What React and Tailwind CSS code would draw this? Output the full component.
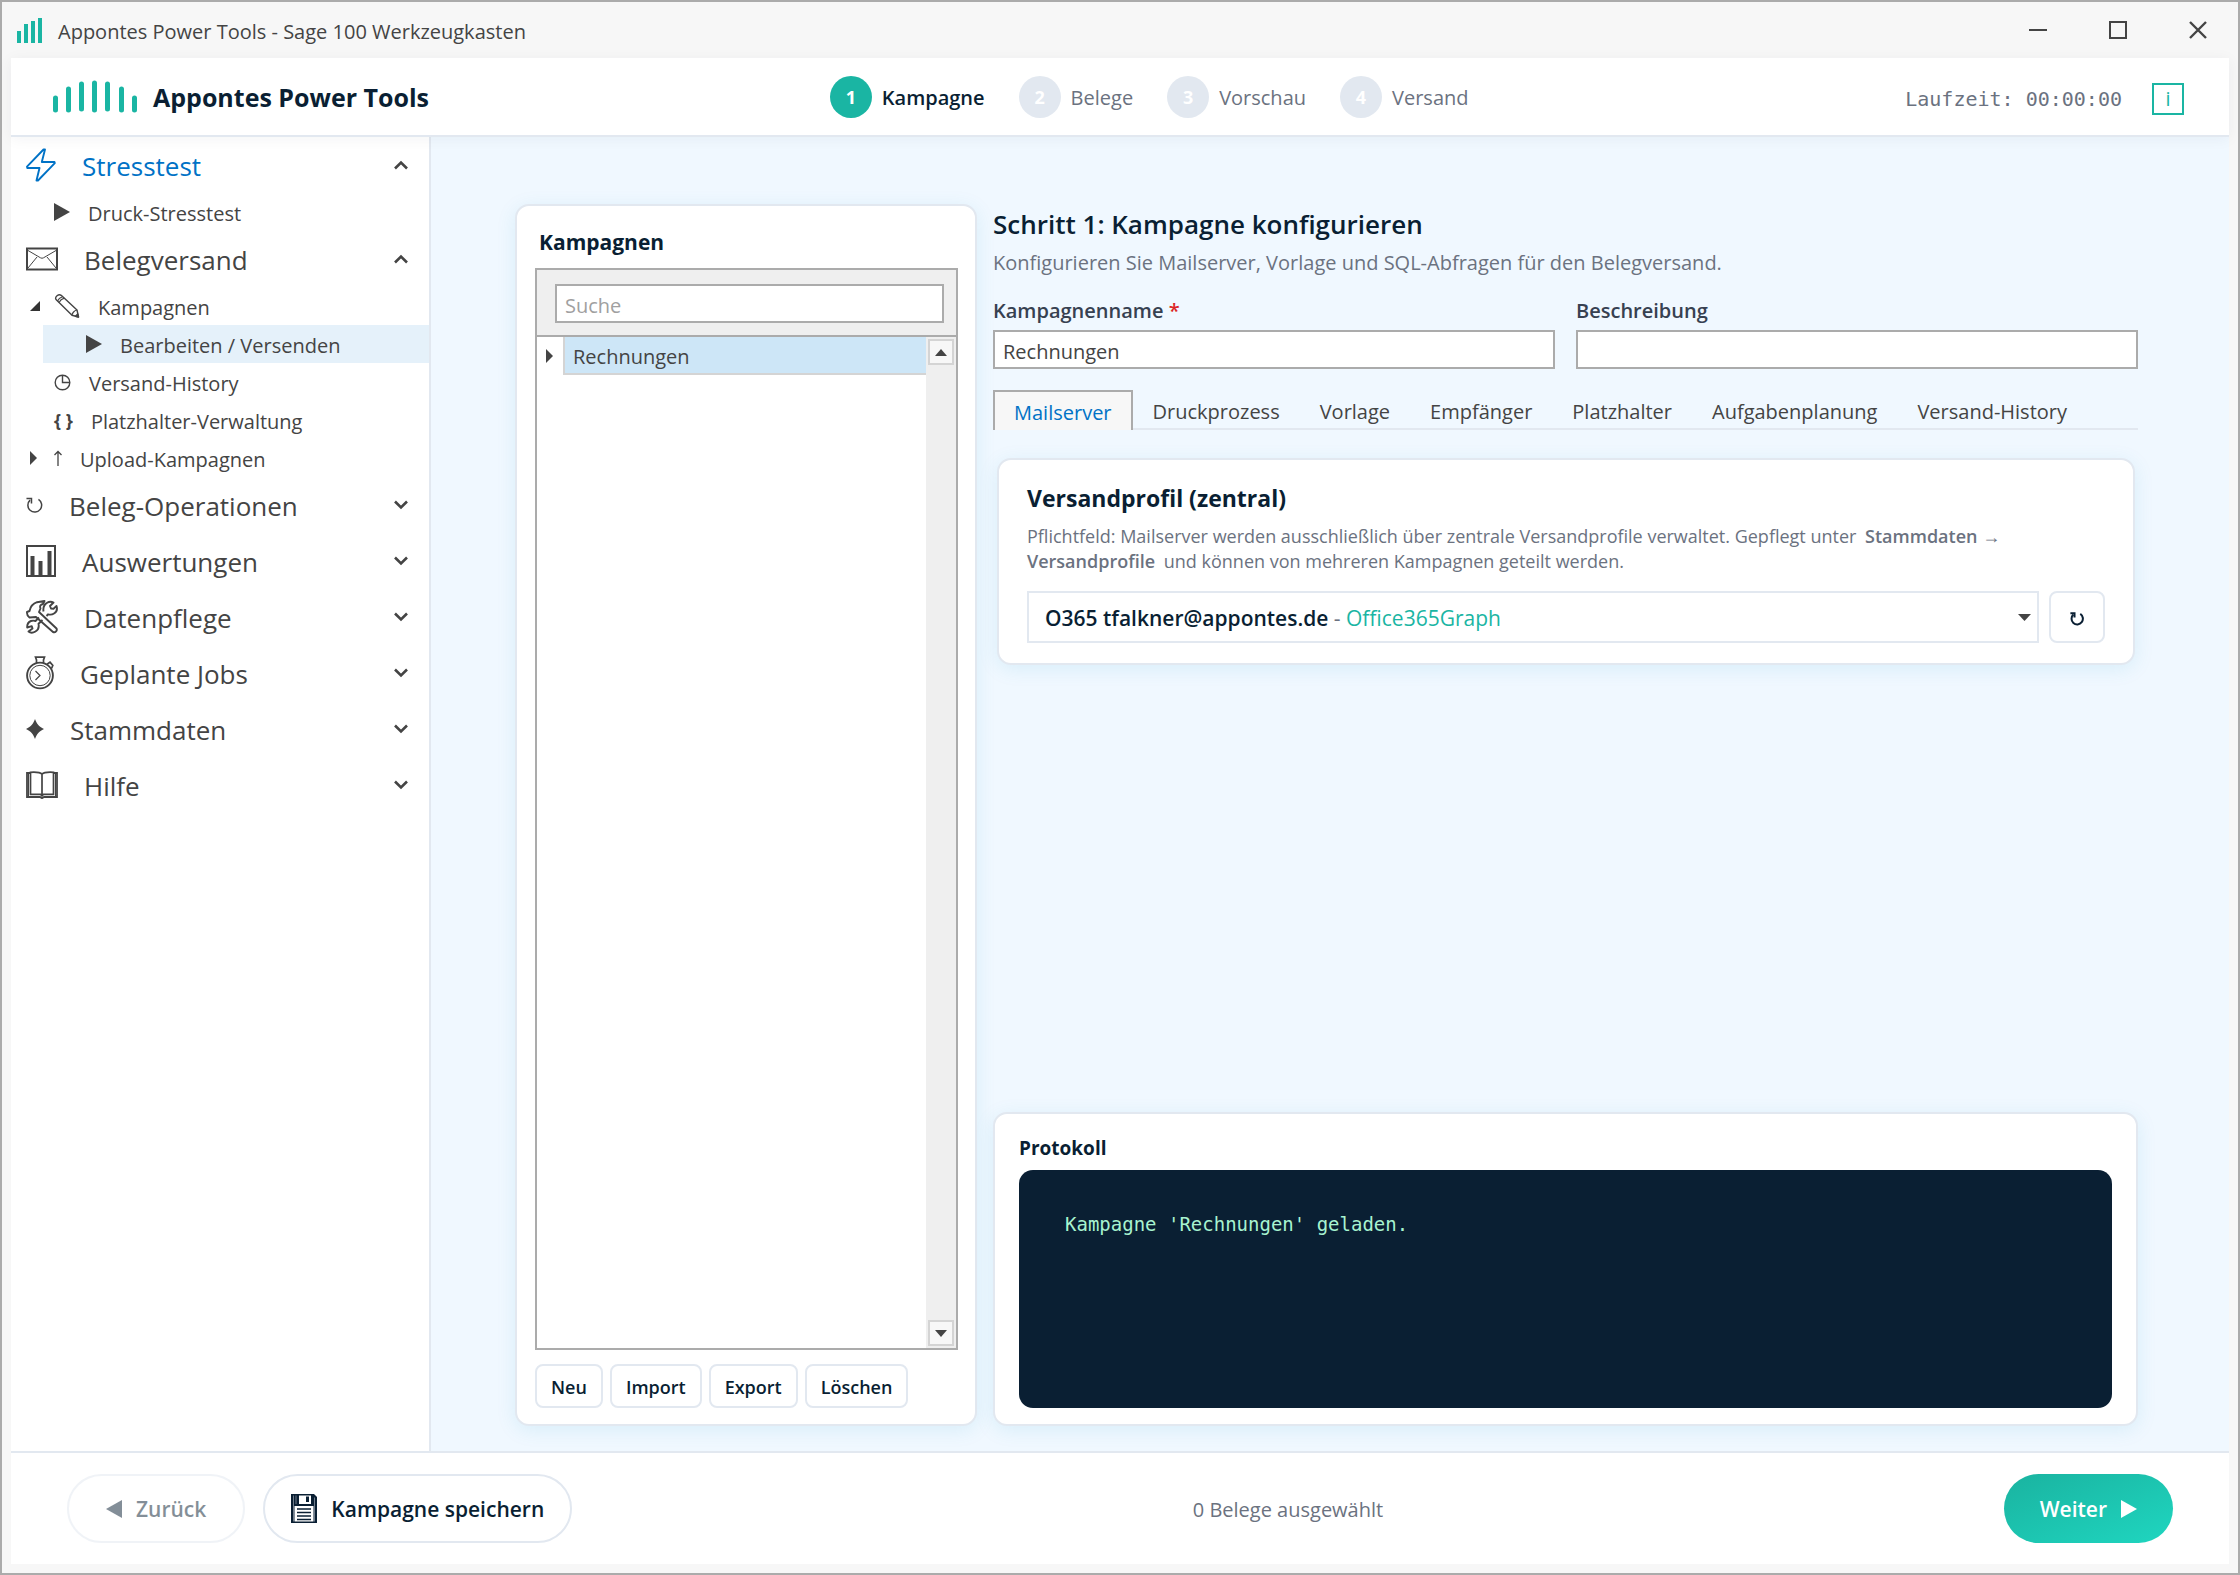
import { useState } from "react";

const CaretRight = () => (
  <svg width="8" height="14" viewBox="0 0 8 14" fill="#444">
    <path d="M0 0 7 7 0 14Z" />
  </svg>
);

const CaretExpanded = () => (
  <svg width="10" height="10" viewBox="0 0 10 10" fill="#333">
    <path d="M10 0V10H0Z" />
  </svg>
);

const PlayIcon = ({ className = "" }) => (
  <svg
    width="16"
    height="18"
    viewBox="0 0 16 18"
    fill="currentColor"
    className={className}
  >
    <path d="M0 0 16 9 0 18Z" />
  </svg>
);

const BoltIcon = () => (
  <svg width="30" height="34" viewBox="0 0 30 34" fill="none" stroke="currentColor" strokeWidth="1.900" strokeLinejoin="round">
    <path d="M17.500 1.500H19L15.800 14H28.500L28.800 15.200 12 32.500H10.500L13.500 20H1.300L1 18.600Z" />
  </svg>
);

const MailIcon = () => (
  <svg width="32" height="24" viewBox="0 0 32 24" fill="none" stroke="currentColor">
    <rect x="1" y="1.500" width="30" height="21" strokeWidth="2" />
    <path d="M2 3.500 14.500 10.800Q16 11.700 17.500 10.800L30 3.500M2 21 11 10M30 21 21 10" strokeWidth="1" />
  </svg>
);

const PencilIcon = () => (
  <svg width="26" height="26" viewBox="0 0 26 26" fill="none" stroke="currentColor" strokeWidth="1.400" strokeLinejoin="round">
    <path d="M2 6.500C0.500 4 4.500 0.500 7.200 2.300L23 17 24.500 24 18 22.300Z" />
    <path d="M3.500 8C5 5 6.500 4.500 8.600 3.700M5 9.500C6.500 6.500 8 5.800 10.200 5.200M18 22.300C18 20 20.500 17.500 23 17" strokeWidth="1.200" />
    <path d="M24.500 24 21.500 23.200 23.700 21Z" fill="currentColor" />
  </svg>
);

const ClockIcon = () => (
  <svg width="17" height="17" viewBox="0 0 17 17" fill="none" stroke="currentColor" strokeWidth="1.400">
    <circle cx="8.500" cy="8.500" r="7.300" />
    <path d="M8.500 1.500V8.500H15.500" />
  </svg>
);

const UploadIcon = () => (
  <svg width="8" height="16" viewBox="0 0 8 16" fill="none" stroke="currentColor" strokeWidth="1.300">
    <path d="M4 16V1.500M0.500 5 4 1.500 7.500 5" />
  </svg>
);

const RefreshIcon = ({ size = 17, stroke = 1.6 }) => (
  <svg width={size} height={size} viewBox="0 0 18 18" fill="none" stroke="currentColor" strokeWidth={stroke}>
    <path d="M13.200 2.500A7.300 7.300 0 1 1 4.300 3.300" />
    <path d="M0.500 1.600H5.800V7" />
  </svg>
);

const ChartIcon = () => (
  <svg width="30" height="32" viewBox="0 0 30 32" fill="none" stroke="currentColor">
    <rect x="1" y="1" width="28" height="30" strokeWidth="2" />
    <path d="M6.500 30V11M14.500 30V16M23.500 30V6" strokeWidth="4" />
  </svg>
);

const ToolsIcon = () => (
  <svg width="32" height="34" viewBox="0 0 32 34" fill="none" stroke="currentColor" strokeWidth="1.900" strokeLinejoin="round">
    <path d="M10 17 3.500 17.500C1.500 16 0.800 14 1 12L3.500 11C4.500 6.500 7 3.500 11 2.200L18.500 1 17 4C14.500 4.500 13.500 6 14.500 8.500L13 12 30.500 28.500C31.500 30.500 29.500 33 27 32Z" />
    <path d="M17.500 11.500C17 8 18 4.500 21 2.800 23 1.600 25.500 1.500 27.500 2.500L24 6 25 8.500 27.500 8.800 30.500 6C31.500 9 30.500 12 28 13.500 26.500 14.500 24 14.800 22 14.300L20.500 16M16.500 20 12.500 23.800C13.200 27 12 30 9.500 31.500 7 33 4 32.800 2.500 31.500L6.500 28.500 5.800 26.200 1.200 27.500C1 24.500 2.500 22 5 21 6.500 20.500 8 20.500 9.500 21L13 17.500" />
  </svg>
);

const StopwatchIcon = () => (
  <svg width="28" height="34" viewBox="0 0 28 34" fill="none" stroke="currentColor">
    <circle cx="14" cy="19.500" r="12.900" strokeWidth="1.900" />
    <circle cx="14" cy="19.500" r="10.200" strokeWidth="1" />
    <path d="M10.500 7V4L9.500 1.200H18.500L17.500 4V7M21 8.200 24 6.200 26.800 9.500 25.500 12.500" strokeWidth="1.700" />
    <path d="M9.500 15 14 19.500 9.500 24" strokeWidth="1.200" />
  </svg>
);

const SparkIcon = () => (
  <svg width="18" height="20" viewBox="0 0 18 20" fill="currentColor">
    <path d="M9 0C10.500 4.500 12.800 7.500 18 10 12.800 12.500 10.500 15.500 9 20 7.500 15.500 5.200 12.500 0 10 5.200 7.500 7.500 4.500 9 0Z" />
  </svg>
);

const BookIcon = () => (
  <svg width="32" height="28" viewBox="0 0 32 28" fill="none" stroke="currentColor">
    <path d="M4.500 2H1V26H14L16 27.200 18 26H31V2H27.500" strokeWidth="1.800" />
    <path d="M16 3.200C14.500 1.600 9 1 4.500 1.300V23.300H14.500L16 25 17.500 23.300H27.500V1.300C23 1 17.500 1.600 16 3.200ZM16 3V25" strokeWidth="1.700" />
    <path d="M2.500 3V25M29.500 3V25" strokeWidth="1" />
  </svg>
);

const FloppyIcon = () => (
  <svg width="26" height="29" viewBox="0 0 26 29">
    <path d="M0 0H23L26 3V29H0Z" fill="#0a1f33" />
    <rect x="8" y="1.500" width="12" height="8.500" fill="#fff" />
    <rect x="15" y="2.500" width="3" height="5.500" fill="#0a1f33" />
    <rect x="3.500" y="12" width="19" height="15.500" fill="#fff" />
    <path d="M6 15H20M6 18.500H20M6 22H20M6 25.500H20" stroke="#0a1f33" strokeWidth="1.300" />
    <path d="M2.500 1.500V27.500M5 1.500V10M23.500 3.500V27.500" stroke="#8a95a3" strokeWidth="0.800" />
  </svg>
);

const Chevron = ({ open }) => (
  <svg width="14" height="10" viewBox="0 0 14 10" fill="none" stroke="#444" strokeWidth="2.600" className="ml-auto">
    <path d={open ? "M1 8.500 7 2.500 13 8.500" : "M1 1.500 7 7.500 13 1.500"} />
  </svg>
);

const NavGroup = ({ icon, label, open, active, children }) => (
  <li>
    <button
      aria-expanded={!!open}
      className={`flex h-14 w-full items-center gap-[26px] pr-[21px] pl-[15px] text-[26px] ${
        active ? "text-[#0072c6]" : "text-[#444]"
      }`}
    >
      {icon}
      <span className="pt-[3px]">{label}</span>
      <Chevron open={open} />
    </button>
    {children && <ul>{children}</ul>}
  </li>
);

const NavItem = ({ icon, label, caret, nested, selected }) => (
  <li className={nested ? "pl-8" : ""}>
    <a
      href="#"
      aria-current={selected ? "page" : undefined}
      className={`flex h-[38px] items-center text-[20px] text-[#444] ${
        nested ? "pl-[11px]" : "pl-[19px]"
      } ${selected ? "bg-[#e5f1fa]" : ""}`}
    >
      <span className={nested ? "" : "w-6 shrink-0"}>{caret}</span>
      <span className={`flex items-center gap-[18px] ${nested ? "pl-8" : ""}`}>
        {icon}
        <span className="pt-[3px]">{label}</span>
      </span>
    </a>
  </li>
);

const steps = ["Kampagne", "Belege", "Vorschau", "Versand"];

const tabs = [
  "Mailserver",
  "Druckprozess",
  "Vorlage",
  "Empfänger",
  "Platzhalter",
  "Aufgabenplanung",
  "Versand-History",
];

const cardClass =
  "rounded-[14px] border-2 border-[#e2e8f0] bg-white shadow-[0_4px_20px_rgba(0,150,200,0.1)]";
const inputClass =
  "h-[39px] w-full border-2 border-[#ababab] bg-white px-2 pt-[3px] text-[20px] text-[#444] outline-none";
const smallButton =
  "h-11 rounded-lg border-2 border-[#e2e8f0] bg-white px-[14px] pt-[2px] text-[18px] font-semibold text-[#0a1f33]";

const TitleBar = () => (
  <div className="flex h-14 items-center pl-[15px] text-[#444]">
    <svg width="26" height="25" viewBox="0 0 26 25" fill="#1ab5a3">
      <path d="M0 13H4V25H0ZM7 6H11V25H7ZM14 3H18V25H14ZM21 0H25V25H21Z" />
    </svg>
    <span className="ml-[15px] pt-[3px] text-[20px]">
      Appontes Power Tools - Sage 100 Werkzeugkasten
    </span>
    <div className="ml-auto flex items-center">
      <button aria-label="Minimieren" className="flex h-14 w-20 items-center justify-center">
        <svg width="18" height="18" viewBox="0 0 18 18" stroke="#444" strokeWidth="2">
          <path d="M0 9H18" />
        </svg>
      </button>
      <button aria-label="Maximieren" className="flex h-14 w-20 items-center justify-center">
        <svg width="18" height="18" viewBox="0 0 18 18" fill="none" stroke="#444" strokeWidth="2">
          <rect x="1" y="1" width="16" height="16" />
        </svg>
      </button>
      <button aria-label="Schließen" className="flex h-14 w-20 items-center justify-center">
        <svg width="18" height="18" viewBox="0 0 18 18" stroke="#444" strokeWidth="2.400">
          <path d="M1 1 17 17M17 1 1 17" />
        </svg>
      </button>
    </div>
  </div>
);

const Header = () => (
  <header className="relative flex h-[79px] items-center border-b-2 border-[#e2e8f0] bg-white pr-[45px] pl-[42px] shadow-[0_2px_14px_rgba(10,31,51,0.05)]">
    <div className="flex items-center gap-[15px]">
      <svg width="85" height="33" viewBox="0 0 85 33" stroke="#1ab5a3" strokeWidth="5" strokeLinecap="round">
        <path d="M2.500 18V30M15.500 9V30M28.500 4V29M41.500 3V30M54.500 4V29M68.500 9V30M81.500 18V30" />
      </svg>
      <span className="pt-[3px] text-[25px] font-bold text-[#0a1f33]">Appontes Power Tools</span>
    </div>
    <ol className="flex flex-1 items-center justify-center gap-[34px] pr-9">
      {steps.map((step, i) => (
        <li key={step} className="flex items-center gap-[10px]">
          <span
            className={`flex size-[42px] items-center justify-center rounded-full pt-[2px] text-[18px] font-bold text-white ${
              i === 0 ? "bg-[#1ab5a3]" : "bg-[#e2e8f0]"
            }`}
          >
            {i + 1}
          </span>
          <span
            className={`pt-[3px] text-[20px] ${
              i === 0 ? "font-semibold text-[#0a1f33]" : "text-[#6b7280]"
            }`}
          >
            {step}
          </span>
        </li>
      ))}
    </ol>
    <div className="flex items-center justify-end gap-[30px] pt-1">
      <span className="font-['DejaVu_Sans_Mono',monospace] text-[20px] text-[#6b7280]">
        Laufzeit: 00:00:00
      </span>
      <button
        aria-label="Information"
        className="flex size-8 items-center justify-center border-2 border-[#1ab5a3] text-[20px] text-[#1ab5a3]"
      >
        i
      </button>
    </div>
  </header>
);

const Sidebar = () => (
  <nav className="w-[420px] shrink-0 border-r-2 border-[#e2e8f0] bg-white">
    <ul>
      <NavGroup icon={<BoltIcon />} label="Stresstest" open active>
        <NavItem icon={<PlayIcon />} label="Druck-Stresstest" />
      </NavGroup>
      <NavGroup icon={<MailIcon />} label="Belegversand" open>
        <NavItem icon={<PencilIcon />} label="Kampagnen" caret={<CaretExpanded />} />
        <NavItem icon={<PlayIcon />} label="Bearbeiten / Versenden" nested selected />
        <NavItem icon={<ClockIcon />} label="Versand-History" />
        <NavItem
          icon={<span className="text-[18px] font-bold">{"{ }"}</span>}
          label="Platzhalter-Verwaltung"
        />
        <NavItem icon={<UploadIcon />} label="Upload-Kampagnen" caret={<CaretRight />} />
      </NavGroup>
      <NavGroup icon={<RefreshIcon />} label="Beleg-Operationen" />
      <NavGroup icon={<ChartIcon />} label="Auswertungen" />
      <NavGroup icon={<ToolsIcon />} label="Datenpflege" />
      <NavGroup icon={<StopwatchIcon />} label="Geplante Jobs" />
      <NavGroup icon={<SparkIcon />} label="Stammdaten" />
      <NavGroup icon={<BookIcon />} label="Hilfe" />
    </ul>
  </nav>
);

const ScrollButton = ({ up }) => (
  <button
    aria-label={up ? "Nach oben" : "Nach unten"}
    className="flex size-[26px] items-center justify-center border-2 border-[#d4d4d4] bg-[#f7f7f7]"
  >
    <svg width="12" height="7" viewBox="0 0 12 7" fill="#444">
      <path d={up ? "M0 7 6 0 12 7Z" : "M0 0H12L6 7Z"} />
    </svg>
  </button>
);

const CampaignList = () => {
  const [search, setSearch] = useState("");

  return (
    <section className={`${cardClass} flex w-[462px] shrink-0 flex-col pt-5 pr-[17px] pb-4 pl-[18px]`}>
      <h2 className="px-1 text-[21px] leading-8 font-bold text-[#0a1f33]">Kampagnen</h2>
      <div className="mt-[10px] flex flex-1 flex-col border-2 border-[#ababab]">
        <div className="border-b-2 border-[#ababab] bg-[#efefef] pt-[14px] pr-3 pb-3 pl-[18px]">
          <input
            type="text"
            aria-label="Suche"
            placeholder="Suche"
            value={search}
            onChange={(e) => setSearch(e.target.value)}
            className={`${inputClass} block placeholder:text-[#a0a0a0]`}
          />
        </div>
        <div className="flex flex-1">
          <div className="flex-1">
            <div className="flex h-[38px]">
              <div className="flex w-[26px] items-center justify-center">
                <CaretRight />
              </div>
              <div className="flex flex-1 items-center border-b-2 border-l-2 border-[#d4d4d4] bg-[#cde6f7] pt-[3px] pl-2 text-[20px] text-[#444]">
                Rechnungen
              </div>
            </div>
          </div>
          <div className="flex w-[30px] flex-col items-center justify-between bg-[#efefef] py-[2px]">
            <ScrollButton up />
            <ScrollButton />
          </div>
        </div>
      </div>
      <div className="mt-[14px] flex gap-[7px]">
        <button className={smallButton}>Neu</button>
        <button className={smallButton}>Import</button>
        <button className={smallButton}>Export</button>
        <button className={smallButton}>Löschen</button>
      </div>
    </section>
  );
};

const ProfileCard = () => (
  <section className={`${cardClass} mt-7 mr-[3px] ml-1 px-7 py-5`}>
    <h3 className="text-[23px] leading-9 font-bold text-[#0a1f33]">Versandprofil (zentral)</h3>
    <p className="mt-2 text-[18px] leading-[25px] text-[#6b7280]">
      Pflichtfeld: Mailserver werden ausschließlich über zentrale Versandprofile verwaltet.
      Gepflegt unter <strong className="mx-1 font-semibold">Stammdaten →</strong>
      <br />
      <strong className="mr-1 font-semibold">Versandprofile</strong> und können von mehreren
      Kampagnen geteilt werden.
    </p>
    <div className="mt-[17px] flex gap-[10px]">
      <div className="relative flex-1">
        <select
          aria-label="Versandprofil"
          className="block h-[52px] w-full appearance-none border-2 border-[#e2e8f0] bg-white px-4 text-[21px] text-transparent outline-none"
        >
          <option>O365 tfalkner@appontes.de - Office365Graph</option>
        </select>
        <div
          aria-hidden="true"
          className="pointer-events-none absolute inset-0 flex items-center justify-between pr-2 pl-[18px]"
        >
          <span className="pt-[3px] text-[21px] text-[#6b7280]">
            <span className="font-semibold text-[#0a1f33]">O365 tfalkner@appontes.de</span>
            {" - "}
            <span className="text-[#1ab5a3]">Office365Graph</span>
          </span>
          <svg width="13" height="7" viewBox="0 0 13 7" fill="#444">
            <path d="M0 0H13L6.500 7Z" />
          </svg>
        </div>
      </div>
      <button
        aria-label="Aktualisieren"
        className="flex h-[52px] w-14 items-center justify-center rounded-lg border-2 border-[#e2e8f0] bg-white pt-1 text-[#0a1f33]"
      >
        <RefreshIcon size={14} stroke={2.6} />
      </button>
    </div>
  </section>
);

const Workspace = () => {
  const [name, setName] = useState("Rechnungen");
  const [description, setDescription] = useState("");
  const [activeTab, setActiveTab] = useState(tabs[0]);

  return (
    <section className="flex flex-1 flex-col">
      <h1 className="text-[26px] leading-10 font-semibold text-[#0a1f33]">
        Schritt 1: Kampagne konfigurieren
      </h1>
      <p className="mt-px text-[20px] leading-9 text-[#6b7280]">
        Konfigurieren Sie Mailserver, Vorlage und SQL-Abfragen für den Belegversand.
      </p>

      <div className="mt-4 grid grid-cols-2 gap-[21px]">
        <label className="text-[20px] leading-7 font-semibold text-[#374151]">
          Kampagnenname <span className="text-[#dc2626]">*</span>
          <input
            type="text"
            value={name}
            onChange={(e) => setName(e.target.value)}
            className={`${inputClass} mt-[5px] block font-normal`}
          />
        </label>
        <label className="text-[20px] leading-7 font-semibold text-[#374151]">
          Beschreibung
          <input
            type="text"
            value={description}
            onChange={(e) => setDescription(e.target.value)}
            className={`${inputClass} mt-[5px] block font-normal`}
          />
        </label>
      </div>

      <div role="tablist" className="mt-[21px] flex h-10">
        {tabs.map((tab) => (
          <button
            key={tab}
            role="tab"
            aria-selected={tab === activeTab}
            onClick={() => setActiveTab(tab)}
            className={`pt-[3px] text-[20px] ${
              tab === activeTab
                ? "border-2 border-b-0 border-[#ababab] bg-[#f7f7f7] px-[19px] text-[#0072c6]"
                : "border-t-2 border-b-2 border-t-transparent border-b-[#e2e8f0] px-5 text-[#444]"
            }`}
          >
            {tab}
          </button>
        ))}
        <div className="flex-1 border-b-2 border-[#e2e8f0]" />
      </div>

      <ProfileCard />

      <div className={`${cardClass} mt-auto px-6 pt-5 pb-4`}>
        <h3 className="text-[19px] leading-7 font-bold text-[#0a1f33]">Protokoll</h3>
        <div
          role="log"
          className="mt-2 h-[238px] rounded-[14px] bg-[#0a1f33] px-[46px] pt-10 font-['DejaVu_Sans_Mono',monospace] text-[19px] leading-7 text-[#a7f3d0]"
        >
          Kampagne 'Rechnungen' geladen.
        </div>
      </div>
    </section>
  );
};

const Footer = () => (
  <footer className="flex h-[113px] items-center justify-between border-t-2 border-[#e2e8f0] bg-white px-14">
    <div className="flex gap-[18px]">
      <button
        disabled
        className="flex h-[69px] items-center gap-[14px] rounded-full border-2 border-[#e2e8f0] px-[37px] text-[21px] font-semibold text-[#0a1f33] opacity-50"
      >
        <PlayIcon className="rotate-180" />
        <span className="pt-[3px]">Zurück</span>
      </button>
      <button className="flex h-[69px] items-center gap-[14px] rounded-full border-2 border-[#e2e8f0] px-[26px] text-[21px] font-semibold text-[#0a1f33]">
        <FloppyIcon />
        <span className="pt-[3px]">Kampagne speichern</span>
      </button>
    </div>
    <span className="pt-[2px] text-[20px] text-[#6b7280]">0 Belege ausgewählt</span>
    <button className="flex h-[69px] items-center gap-[14px] rounded-full bg-linear-to-br from-[#1ab3a0] to-[#1fd6c0] px-[36px] text-[21px] font-semibold text-white">
      <span className="pt-[3px]">Weiter</span>
      <PlayIcon />
    </button>
  </footer>
);

const App = () => {
  return (
    <div className="flex min-h-screen flex-col border-2 border-[#ababab] bg-[#f7f7f7] font-['Open_Sans',sans-serif]">
      <TitleBar />
      <div className="mx-[9px] mb-[9px] flex flex-1 flex-col">
        <Header />
        <div className="flex flex-1">
          <Sidebar />
          <main className="flex flex-1 gap-4 bg-[#f0f8ff] pt-[67px] pr-[91px] pb-[25px] pl-[84px]">
            <CampaignList />
            <Workspace />
          </main>
        </div>
        <Footer />
      </div>
    </div>
  );
};

export default App;
